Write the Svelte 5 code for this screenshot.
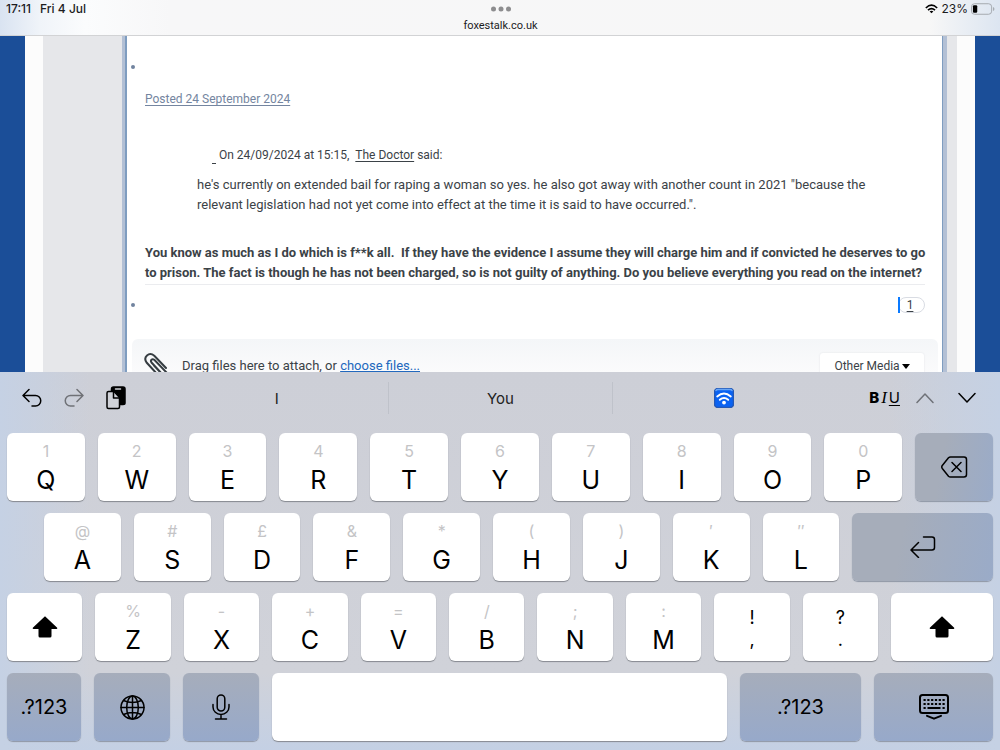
<script>
  const rowOne = [
    ['1', 'Q'], ['2', 'W'], ['3', 'E'], ['4', 'R'], ['5', 'T'],
    ['6', 'Y'], ['7', 'U'], ['8', 'I'], ['9', 'O'], ['0', 'P']
  ];
  const rowTwo = [
    ['@', 'A'], ['#', 'S'], ['£', 'D'], ['&', 'F'], ['*', 'G'],
    ['(', 'H'], [')', 'J'], ['′', 'K'], ['″', 'L']
  ];
  const rowThree = [
    ['%', 'Z'], ['-', 'X'], ['+', 'C'], ['=', 'V'], ['/', 'B'], [';', 'N'], [':', 'M']
  ];
</script>

{#snippet letterKey(hint, letter)}
  <button class="key"><span class="hint">{hint}</span><span class="letter">{letter}</span></button>
{/snippet}

{#snippet shiftIcon()}
  <svg width="26" height="23" viewBox="0 0 26 23"><path d="M13 .3 25.2 11.700q.5 1.300-.8 1.300H19.500V20q0 1.500-1.500 1.500H8q-1.500 0-1.500-1.500V13H1.600Q.3 13 .8 11.700Z" /></svg>
{/snippet}

<div class="screen">
  <header class="status">
    <div class="clock"><span>17:11</span><span>Fri 4 Jul</span></div>
    <div class="address">
      <svg width="20" height="6" viewBox="0 0 20 6" fill="#8d8d8f"><circle cx="2.500" cy="3" r="2.500" /><circle cx="10" cy="3" r="2.500" /><circle cx="17.500" cy="3" r="2.500" /></svg>
      <span>foxestalk.co.uk</span>
    </div>
    <div class="power">
      <svg width="13" height="10" viewBox="0 0 14 10" fill="none" stroke="#000" stroke-width="1.800"><path d="M.9 3.900Q7-2 13.100 3.900M3.200 6.300Q7 2.800 10.800 6.300" /><path d="M7 9.700 5 7.700Q7 6.200 9 7.700Z" fill="#000" stroke="none" /></svg>
      <span>23%</span>
      <svg width="24" height="12" viewBox="0 0 25 12" fill="none"><rect x=".5" y=".5" width="21" height="11" rx="3.200" stroke="#a3a7ad" /><rect x="2" y="2" width="4.500" height="8" rx="1.200" fill="#000" /><path d="M23 4v4q1.400-.6 1.400-2T23 4Z" fill="#a3a7ad" /></svg>
    </div>
  </header>

  <main class="site">
    <div class="page">
      <div class="thread">
        <ul class="posts">
          <li class="post">
            <a class="posted" href="#posted">Posted 24 September 2024</a>
            <blockquote>
              <p class="cite"><a class="jump" href="#quoted" aria-label="Go to quoted post"></a>On 24/09/2024 at 15:15, &nbsp;<a href="#doctor">The Doctor</a> said:</p>
              <p>he's currently on extended bail for raping a woman so yes. he also got away with another count in 2021 "because the relevant legislation had not yet come into effect at the time it is said to have occurred.".</p>
            </blockquote>
            <p class="reply">You know as much as I do which is f**k all.&nbsp; If they have the evidence I assume they will charge him and if convicted he deserves to go<br />to prison. The fact is though he has not been charged, so is not guilty of anything. Do you believe everything you read on the internet?</p>
          </li>
          <li class="reactions"><a class="count" href="#reactions">1</a></li>
        </ul>
        <section class="attach">
          <svg width="24" height="26" viewBox="0 0 24 26" fill="none" stroke="#353c41" stroke-width="2" stroke-linecap="round"><path d="M19 22 7.500 9.500Q6.300 8 7.500 6.800T10.300 6.800L23 20M14 22 2.800 9.800Q-.4 5.500 3 2.500T10.300 2.800L22 15M17 20 10 12.500" /></svg>
          <p>Drag files here to attach, or <a href="#choose">choose files...</a></p>
          <button class="media">Other Media <svg width="8" height="5" viewBox="0 0 8 5"><path d="M0 0h8L4 5Z" /></svg></button>
        </section>
      </div>
    </div>
  </main>

  <section class="keyboard" aria-label="Keyboard">
    <div class="bar">
      <div class="tools left">
        <button aria-label="Undo"><svg width="20" height="20" viewBox="0 0 20 20"><path d="M7 1.500 1 7.500l6 6M1.500 7.500H13.500a5 5 0 0 1 0 10.500H10" /></svg></button>
        <button class="off" aria-label="Redo"><svg width="20" height="20" viewBox="0 0 20 20"><path d="m13 1.500 6 6-6 6M18.500 7.500H6.500a5 5 0 0 0 0 10.500H10" /></svg></button>
        <button aria-label="Paste"><svg width="20" height="24" viewBox="0 0 20 24"><path d="M5.500 5V3q0-2 2-2H17q2 0 2 2v14q0 1.500-2 1.500h-3V11L8.500 5Z" fill="#000" /><path class="clip" d="M9.500 3h5" /><path d="M2.500 5.500H8l5.500 6V21q0 1.500-1.500 1.500H2.500Q1 22.500 1 21V7q0-1.500 1.500-1.500Z" fill="#d0d2d8" /><path d="M7.500 6v6h6" /></svg></button>
      </div>
      <button class="word">I</button>
      <button class="word">You</button>
      <button class="word" aria-label="Wireless">
        <svg class="emoji" width="20" height="20" viewBox="0 0 20 20"><rect x=".5" y=".5" width="19" height="19" rx="3.500" fill="#0a62f2" stroke="#2458b5" /><path d="M2 2.500Q2.500 1.500 4 1.500h12q1.500 0 2 1" fill="none" stroke="#69a7f7" /><g fill="none" stroke="#fff" stroke-width="1.900" stroke-linecap="round"><path d="M3.200 8.500Q10 2.700 16.800 8.500M5.800 11.800Q10 8.300 14.200 11.800" /></g><circle cx="10" cy="14.600" r="1.900" fill="#fff" /></svg>
      </button>
      <div class="tools right">
        <button class="format"><b>B</b><i>I</i><u>U</u></button>
        <button class="off" aria-label="Previous"><svg width="18" height="12" viewBox="0 0 18 12"><path d="m1 10.500 8-8.500 8 8.500" /></svg></button>
        <button aria-label="Next"><svg width="18" height="12" viewBox="0 0 18 12"><path d="m1 1.500 8 8.500 8-8.500" /></svg></button>
      </div>
    </div>

    <div class="row one">
      {#each rowOne as [hint, letter]}{@render letterKey(hint, letter)}{/each}
      <button class="key dark" aria-label="Delete"><svg width="27" height="22" viewBox="0 0 27 22"><path d="M9.500 1H23q2.500 0 2.500 2.500v15Q25.500 21 23 21H9.500Q8.300 21 7.500 20.200L1.300 12.500Q.2 11 1.300 9.500L7.500 1.800Q8.300 1 9.500 1ZM11 6.500l9 9m0-9-9 9" /></svg></button>
    </div>
    <div class="row two">
      {#each rowTwo as [hint, letter]}{@render letterKey(hint, letter)}{/each}
      <button class="key dark" aria-label="Return"><svg width="26" height="22" viewBox="0 0 26 22"><path d="M13.500 1H22q2.500 0 2.500 2.500v8q0 2.500-2.500 2.500H1.500M8.500 6.500 1 14l7.500 7.500" /></svg></button>
    </div>
    <div class="row three">
      <button class="key" aria-label="Shift">{@render shiftIcon()}</button>
      {#each rowThree as [hint, letter]}{@render letterKey(hint, letter)}{/each}
      <button class="key pair"><span>!</span><span>,</span></button>
      <button class="key pair"><span>?</span><span>.</span></button>
      <button class="key" aria-label="Right shift">{@render shiftIcon()}</button>
    </div>
    <div class="row four">
      <button class="key dark">.?123</button>
      <button class="key dark" aria-label="Next keyboard"><svg width="25" height="25" viewBox="0 0 25 25"><circle cx="12.500" cy="12.500" r="11.500" /><ellipse cx="12.500" cy="12.500" rx="5.800" ry="11.500" /><path d="M12.500 1v23M1 12.500h23M3.500 5.500Q12.500 9.500 21.500 5.500M3.500 19.500Q12.500 15.500 21.500 19.500" /></svg></button>
      <button class="key dark" aria-label="Dictate"><svg width="18" height="26" viewBox="0 0 18 26"><rect x="5.200" y="1" width="7.600" height="16" rx="3.800" /><path d="M1 10.500v2.500a8 7.500 0 0 0 16 0v-2.500M9 20.500V25M3.500 25h11" /></svg></button>
      <button class="key" aria-label="Space"></button>
      <button class="key dark">.?123</button>
      <button class="key dark" aria-label="Hide keyboard"><svg class="board" width="30" height="26" viewBox="0 0 30 26"><rect x="1" y="1" width="28" height="18" rx="2.500" /><path class="dots" d="M4.500 6h21.600M4.500 10h21.600" stroke-dasharray="2.200 1.600" /><path class="dots" d="M4.500 14h2.200M8.500 14h13M23.500 14h2.200" /><path d="m8 21.800 7 2.900 7-2.900" /></svg></button>
    </div>
  </section>
</div>

<style>
  :global(body) { margin: 0; }
  * { box-sizing: border-box; }
  p, ul, blockquote { margin: 0; padding: 0; }
  svg { display: block; flex: none; }
  button { font-family: Inter, sans-serif; color: #000; border: 0; padding: 0; background: none; }

  .screen {
    height: 100vh;
    display: flex;
    flex-direction: column;
    overflow: hidden;
    font-family: Roboto, sans-serif;
    color: #3b4247;
  }

  .status {
    flex: none;
    height: 36px;
    display: grid;
    grid-template-columns: 1fr auto 1fr;
    align-items: start;
    padding: 2px 5px 0 6px;
    border-bottom: 1px solid #d2d3d5;
    background: linear-gradient(90deg, #d9e3f1 0, #f0f4f9 40px, #fbfcfd 85px, #f7f7f8 170px, #f7f7f7 calc(100% - 70px), #dce5f1 100%);
    font: 500 12px/14px Inter, sans-serif;
    color: #1c1c1e;
  }
  .clock { display: flex; gap: 9px; }
  .address { display: flex; flex-direction: column; align-items: center; gap: 7px; padding-top: 4px; font: 11px/14px Roboto, sans-serif; }
  .power { display: flex; justify-content: flex-end; align-items: center; gap: 3px; font-weight: 400; }

  .site { flex: 1; min-height: 0; overflow: hidden; background: #1b4e98; padding: 0 25px; }
  .page {
    display: flow-root;
    height: 100%;
    padding: 0 18px;
    background: linear-gradient(90deg, #fcfcfc 18px, #e6e7ea 18px calc(100% - 18px), #fcfcfc calc(100% - 18px));
  }
  .thread {
    height: 100%;
    background: #fff;
    border: solid #b3c0d5;
    border-width: 0 4px 0 3px;
    margin: 0 10px 0 79px;
    box-shadow: inset 2px 0 #7f9dc0, inset -1px 0 #7f9dc0;
    padding: 1px 5px 0 7px;
  }

  .posts { list-style: none; font-size: 13px; line-height: 20px; padding: 0 13px; }
  .post, .reactions { position: relative; }
  .post::before, .reactions::before {
    content: '';
    position: absolute;
    left: -14px;
    top: 28px;
    width: 4px;
    height: 4px;
    border-radius: 50%;
    background: #71839f;
  }
  .reactions::before { top: 18px; }
  .post { padding-top: 52px; border-bottom: 1px solid #ebecef; }
  .posted { color: #7485a0; }
  .posted, .cite, .count { font-size: 12px; }
  .posted, .count, blockquote a { text-underline-offset: 2px; }
  blockquote { padding: 36px 52px 0; }
  blockquote a { color: inherit; }
  .cite { padding-left: 15px; margin-bottom: 10px; }
  .jump { display: inline-block; width: 4px; height: 12px; border-bottom: 1px solid #3b4247; margin-right: 3px; vertical-align: -5px; }
  .reply { font-weight: 700; margin-top: 28px; padding-bottom: 1px; white-space: nowrap; }
  .reactions { display: flex; justify-content: flex-end; padding-top: 12px; }
  .count {
    position: relative;
    width: 27px;
    height: 16px;
    padding-right: 3px;
    border: 1px solid #d9dce3;
    border-radius: 8px;
    line-height: 15px;
    text-align: center;
    color: #3b4247;
  }
  .count::before { content: ''; position: absolute; left: -1px; top: -1px; width: 2px; height: 16px; background: #0a7aff; }

  .attach {
    display: flex;
    align-items: flex-start;
    height: 70px;
    margin-top: 26px;
    padding: 14px 14px 0 12px;
    border-radius: 6px;
    background: linear-gradient(#f4f6f8, #fbfbfc 34px);
    font-size: 13px;
    line-height: 14px;
  }
  .attach p { flex: 1; padding: 6px 0 0 14px; }
  .attach a { color: #2268bd; text-underline-offset: 1px; }
  .media {
    display: flex;
    align-items: center;
    justify-content: center;
    gap: 2px;
    width: 104px;
    height: 26px;
    border-radius: 3px;
    background: #fff;
    box-shadow: 0 0 2px #dfe1e5;
    font: 12px/14px Roboto, sans-serif;
    color: #3b4247;
  }

  .keyboard {
    flex: none;
    display: flex;
    flex-direction: column;
    gap: 12px;
    padding: 0 7px 9px;
    background:
      linear-gradient(90deg, #c5d1e4 0, #c5d1e400 90px calc(100% - 110px), #c5d1e4 100%),
      linear-gradient(#cdcfd7 0, #d0d2d9 300px, #c4d0e4 100%);
  }
  .bar {
    display: grid;
    grid-template-columns: 158px 1fr 1fr 1fr 158px;
    height: 49px;
    padding-top: 3px;
    align-items: center;
  }
  .bar svg, .dark svg { fill: none; stroke: #000; stroke-width: 1.5px; stroke-linecap: round; stroke-linejoin: round; }
  .bar .emoji { stroke: none; }
  .clip { stroke: #d0d2d8; }
  .dark .board { stroke-width: 2px; }
  .dots { stroke-linecap: butt; }
  .tools { display: flex; align-items: center; }
  .left { gap: 22px; padding-left: 15px; }
  .right { justify-content: flex-end; gap: 24px; padding-right: 17px; }
  .right .format { margin-right: -8px; }
  .off { opacity: .45; }
  .word { display: grid; place-items: center; height: 32px; font-size: 15px; color: #222; }
  .word + .word { border-left: 1px solid #bfc2ca; }
  .format { display: flex; gap: 2px; font-size: 15px; line-height: 18px; }
  .format i { font-family: "Liberation Serif", serif; font-size: 17px; }
  .format u { text-underline-offset: 2px; }
  .format b { font-weight: 800; }

  .row { display: grid; gap: 13px; height: 68px; }
  .one { grid-template-columns: repeat(11, 1fr); }
  .two { grid-template-columns: repeat(9, 77fr) 141fr; padding-left: 37px; }
  .three { grid-template-columns: repeat(10, 151fr) 204fr; }
  .four { grid-template-columns: 74fr 76fr 76fr 455fr 121fr 119fr; }
  .key {
    min-width: 0;
    display: flex;
    flex-direction: column;
    align-items: center;
    justify-content: center;
    border-radius: 6px;
    background: #fff;
    box-shadow: 0 1px 1px #85888f;
    font-size: 20px;
  }
  .hint { font-size: 16px; line-height: 20px; color: #c4c4c6; margin-top: 6px; }
  .letter { font-size: 25px; line-height: 38px; }
  .pair { font-size: 18px; line-height: 22px; padding-top: 4px; }
  .dark { background: #a6adba; box-shadow: 0 1px 1px #8e96a5; }
  .one .dark, .two .dark { background: linear-gradient(100deg, #a6adba 35%, #9aabc8); }
  .four .dark { background: linear-gradient(#a6adbb, #97a9ca); }
</style>
